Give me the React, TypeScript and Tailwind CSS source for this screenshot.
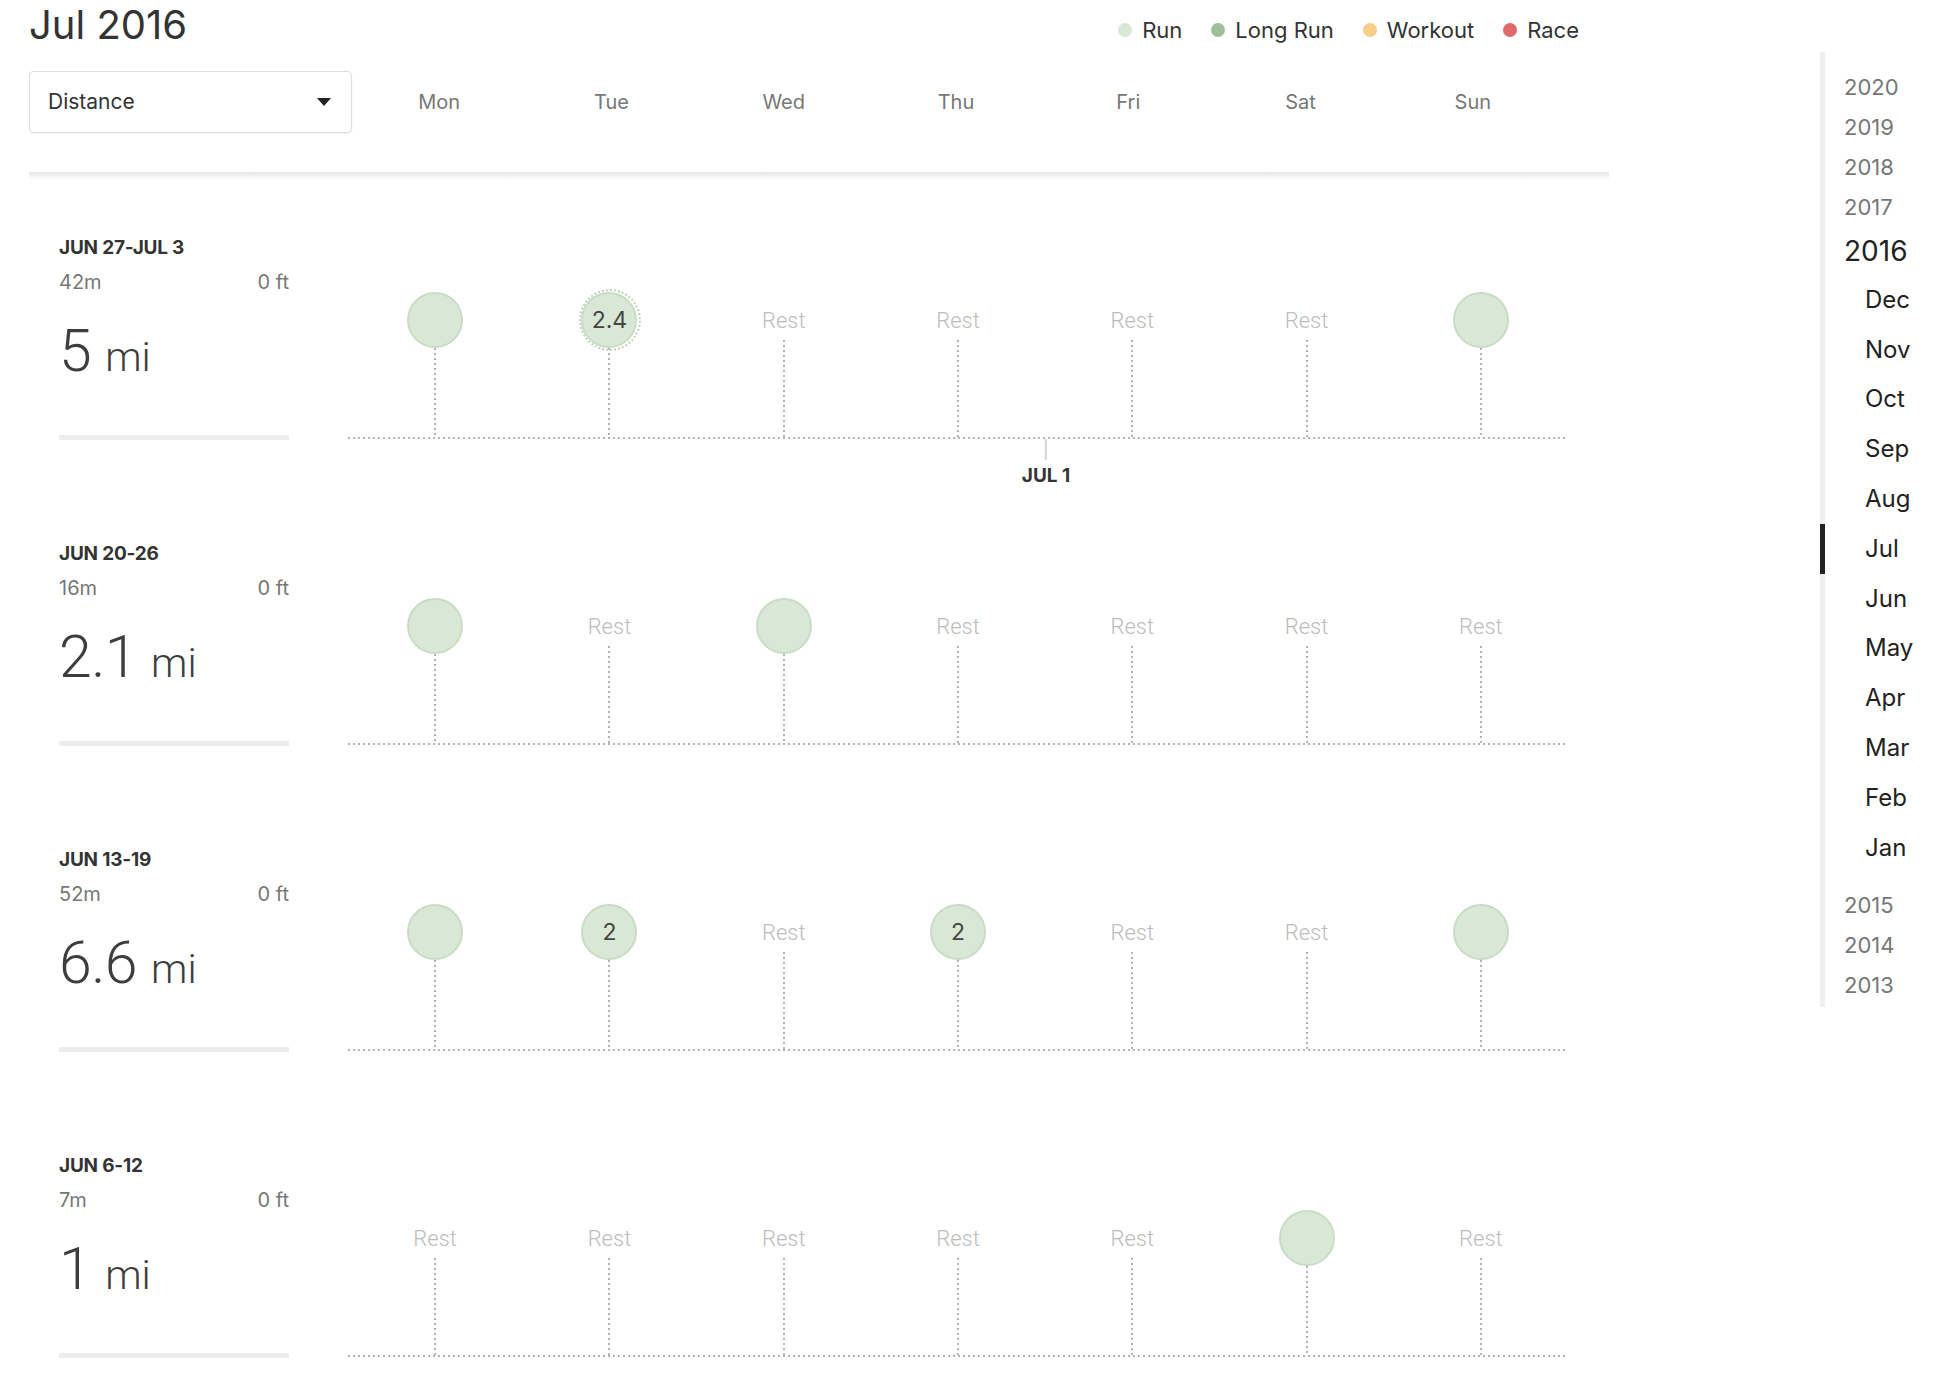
import React from "react";

const DAYS = ["Mon", "Tue", "Wed", "Thu", "Fri", "Sat", "Sun"];

const LEGEND = [
  { label: "Run", color: "bg-[#d8e8d4]" },
  { label: "Long Run", color: "bg-[#9fbf98]" },
  { label: "Workout", color: "bg-[#f6cf88]" },
  { label: "Race", color: "bg-[#e06a6a]" },
];

// "-" = rest day, "" = run without label, anything else = run with label
const WEEKS = [
  { range: "JUN 27-JUL 3", time: "42m", elev: "0 ft", dist: "5", days: ["", "2.4", "-", "-", "-", "-", ""], hover: 1, marker: true },
  { range: "JUN 20-26", time: "16m", elev: "0 ft", dist: "2.1", days: ["", "-", "", "-", "-", "-", "-"] },
  { range: "JUN 13-19", time: "52m", elev: "0 ft", dist: "6.6", days: ["", "2", "-", "2", "-", "-", ""] },
  { range: "JUN 6-12", time: "7m", elev: "0 ft", dist: "1", days: ["-", "-", "-", "-", "-", "", "-"] },
];

const YEARS_BEFORE = ["2020", "2019", "2018", "2017"];
const MONTHS = ["Dec", "Nov", "Oct", "Sep", "Aug", "Jul", "Jun", "May", "Apr", "Mar", "Feb", "Jan"];
const YEARS_AFTER = ["2015", "2014", "2013"];

function DottedV({ className = "" }: { className?: string }) {
  return <div className={`w-[2px] flex-1 bg-[linear-gradient(to_bottom,#b3b3b3_2px,transparent_2px)] bg-[length:2px_5px] ${className}`} />;
}

function DayCell({ value, hover }: { value: string; hover?: boolean }) {
  if (value === "-") {
    return (
      <div className="flex flex-col items-center pt-[102px] h-full">
        <div className="h-[56px] flex items-center text-[22px] font-light text-[#bcbcbc] [font-family:Roboto,sans-serif]">Rest</div>
        <DottedV className="-mt-[8px]" />
      </div>
    );
  }
  return (
    <div className="flex flex-col items-center pt-[102px] h-full">
      <div className="relative">
        {hover && <div className="absolute -top-[3px] -bottom-[3px] -left-[2px] -right-[4px] rounded-full border-2 border-dotted border-[#bfd2ba]" />}
        <div className="relative w-[56px] h-[56px] rounded-full bg-[#d8e8d4] border-2 border-[#cadcc5] flex items-center justify-center text-[23px] text-[#444]">
          {value}
        </div>
      </div>
      <DottedV />
    </div>
  );
}

function Week({ w }: { w: (typeof WEEKS)[number] }) {
  return (
    <section className="h-[306px] shrink-0 flex pl-[59px]">
      <div className="w-[230px] flex flex-col">
        <div className="mt-[47px] h-[22px] text-[19px] leading-[22px] font-bold text-[#333] tracking-[-0.2px]">{w.range}</div>
        <div className="mt-[11px] h-[24px] flex justify-between text-[20px] leading-[24px] text-[#777]">
          <span>{w.time}</span>
          <span>{w.elev}</span>
        </div>
        <div className="mt-[28px] h-[58px] leading-[58px] flex items-baseline font-light text-[#3d3d3d] [font-family:Roboto,sans-serif]">
          <span className="text-[59px] tracking-[-0.5px]">{w.dist}</span>
          <span className="text-[41px] ml-[14px]">mi</span>
        </div>
        <div className="mt-[55px] h-[5px] bg-[#ececec]" />
      </div>
      <div className="ml-[59px] w-[1220px] relative">
        <div className="grid grid-cols-7 h-[247px]">
          {w.days.map((d, i) => (
            <DayCell key={i} value={d} hover={w.hover === i} />
          ))}
        </div>
        <div className="h-[2px] bg-[linear-gradient(to_right,#b3b3b3_2px,transparent_2px)] bg-[length:5px_2px]" />
        {w.marker && (
          <div className="absolute top-[249px] left-[698px] -translate-x-1/2 flex flex-col items-center">
            <div className="w-[2px] h-[21px] bg-[#d6d6d6]" />
            <div className="mt-[6px] text-[19px] leading-[20px] font-bold text-[#333]">JUL 1</div>
          </div>
        )}
      </div>
    </section>
  );
}

function Sidebar() {
  return (
    <aside className="flex-1 pt-[52px] flex">
      <div className="relative w-[5px] h-[955px] bg-[#efefef]">
        <div className="absolute left-0 top-[472px] w-[5px] h-[50px] bg-[#222]" />
      </div>
      <nav className="pt-[15px] ml-[19px]">
        {YEARS_BEFORE.map((y) => (
          <div key={y} className="h-[40px] flex items-center text-[22px] text-[#777]">{y}</div>
        ))}
        <div className="h-[48px] flex items-center text-[28px] text-[#222]">2016</div>
        {MONTHS.map((m) => (
          <div key={m} className="h-[49.8px] flex items-center pl-[21px] text-[24px] text-[#222]">{m}</div>
        ))}
        <div className="mt-[13px]">
          {YEARS_AFTER.map((y) => (
            <div key={y} className="h-[40px] flex items-center text-[22px] text-[#777]">{y}</div>
          ))}
        </div>
      </nav>
    </aside>
  );
}

export default function App() {
  return (
    <div className="h-[1384px] w-full overflow-hidden bg-white text-[#333] [font-family:Inter,'Liberation_Sans',sans-serif] flex">
      <main className="w-[1820px] shrink-0 flex flex-col">
        <header className="pl-[29px] w-[1609px]">
          <div className="flex items-start">
            <h1 className="text-[40px] leading-[49px] font-normal text-[#333]">Jul 2016</h1>
            <div className="ml-auto mr-[30px] mt-[17px] flex items-center gap-[29px] text-[22px] leading-[26px] text-[#333]">
              {LEGEND.map((l) => (
                <div key={l.label} className="flex items-center gap-[10px]">
                  <span className={`w-[14px] h-[14px] rounded-full ${l.color}`} />
                  <span>{l.label}</span>
                </div>
              ))}
            </div>
          </div>
          <div className="mt-[22px] flex items-center">
            <div className="w-[323px] h-[62px] border border-[#dddddd] rounded-[4px] flex items-center pl-[18px] pr-[20px] shadow-[0_1px_2px_rgba(0,0,0,0.06)]">
              <span className="text-[21px] text-[#333]">Distance</span>
              <svg className="ml-auto" width="14" height="8" viewBox="0 0 14 8">
                <path d="M0 0h14L7 8z" fill="#222" />
              </svg>
            </div>
            <div className="ml-[1px] w-[1206px] grid grid-cols-7">
              {DAYS.map((d) => (
                <div key={d} className="text-center text-[20px] text-[#777]">{d}</div>
              ))}
            </div>
          </div>
          <div className="mt-[39px] h-[8px] bg-linear-to-b from-[#e6e6e6] to-white" />
        </header>
        <div className="mt-[10px] flex flex-col">
          {WEEKS.map((w) => (
            <Week key={w.range} w={w} />
          ))}
        </div>
      </main>
      <Sidebar />
    </div>
  );
}
